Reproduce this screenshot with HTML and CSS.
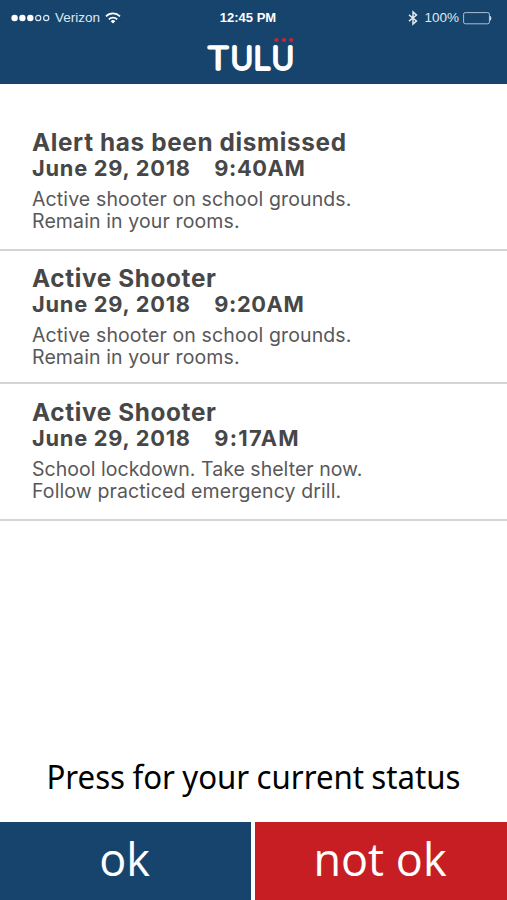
FILE: index.html
```html
<!DOCTYPE html>
<html lang="en">
<head>
<meta charset="utf-8">
<title>TULU</title>
<link rel="stylesheet" href="styles.css">
</head>
<body>
<div class="app">
  <header class="header">
    <div class="status">
      <div class="carrier">
        <svg class="signal" width="39" height="8" viewBox="0 0 39 8"><g fill="#fff"><circle cx="3.6" cy="4" r="3.2"/><circle cx="11.4" cy="4" r="3.2"/><circle cx="19.3" cy="4" r="3.2"/></g><g fill="none" stroke="#dfe8f0" stroke-width="1.2"><circle cx="27.2" cy="4" r="2.6"/><circle cx="35.2" cy="4" r="2.6"/></g></svg>
        <span>Verizon</span>
        <svg class="wifi" width="16" height="12" viewBox="0 0 16 12"><g fill="none" stroke="#fff" stroke-width="1.7"><path d="M1 4.3a10 10 0 0 1 14 0"/><path d="M3.8 7.3a6 6 0 0 1 8.4 0"/></g><path d="M5.7 9.2a3.3 3.3 0 0 1 4.6 0L8 11.5z" fill="#fff"/></svg>
      </div>
      <time class="clock">12:45 PM</time>
      <div class="power">
        <svg class="bluetooth" width="10" height="14" viewBox="0 0 10 14"><path d="M1 3.8l7.5 6.1L5 13V1l3.5 3.1L1 10.2" fill="none" stroke="#dfe8f0" stroke-width="1.5"/></svg>
        <span>100%</span>
        <svg class="battery" width="29" height="13" viewBox="0 0 29 13"><rect x=".6" y=".6" width="25.8" height="11.2" rx="1.6" fill="none" stroke="#a9bfd2" stroke-width="1"/><path d="M27.2 4.2q1.6 2 0 4.2z" fill="#fff" stroke="#fff" stroke-width=".6"/></svg>
      </div>
    </div>
    <svg class="logo" width="90" height="46" viewBox="0 0 90 46"><g class="wordmark"><text transform="translate(1.2 33) scale(1.2 1)">T</text><text y="33" x="25.3 47.9 66.2">ULU</text></g><g fill="#d3202c"><circle cx="70.5" cy="4" r="2.1"/><circle cx="78" cy="4" r="2.1"/><circle cx="85.2" cy="4" r="2.1"/></g></svg>
  </header>
  <main class="alerts">
    <article class="alert first">
      <h2>Alert has been dismissed</h2>
      <p class="when"><span>June 29, 2018</span><span>9:40AM</span></p>
      <p class="message">Active shooter on school grounds.<br>Remain in your rooms.</p>
    </article>
    <article class="alert second">
      <h2>Active Shooter</h2>
      <p class="when"><span>June 29, 2018</span><span>9:20AM</span></p>
      <p class="message">Active shooter on school grounds.<br>Remain in your rooms.</p>
    </article>
    <article class="alert third">
      <h2>Active Shooter</h2>
      <p class="when"><span>June 29, 2018</span><span class="wide">9:17AM</span></p>
      <p class="message"><span class="tight">School lockdown. Take shelter now.</span><br>Follow practiced emergency drill.</p>
    </article>
  </main>
  <footer class="footer">
    <p class="prompt">Press for your current status</p>
    <div class="actions">
      <button class="ok">ok</button>
      <button class="not-ok">not ok</button>
    </div>
  </footer>
</div>
</body>
</html>
```
FILE: styles.css
```css
* { box-sizing: border-box; }
body { margin: 0; background: #fff; }
h2, p { margin: 0; white-space: nowrap; }
svg { display: block; flex: none; overflow: visible; }

.app {
  width: 507px;
  height: 900px;
  display: flex;
  flex-direction: column;
  font-family: Inter, sans-serif;
}

.header {
  height: 84px;
  background: #17446d;
  color: #fff;
}
.status {
  height: 36px;
  padding: 0 15px 0 11px;
  display: grid;
  grid-template-columns: 1fr auto 1fr;
  align-items: center;
  font: 13.5px/36px "Liberation Sans", sans-serif;
}
.carrier, .power { display: flex; align-items: center; color: #dfe8f0; }
.carrier span { margin: 0 5px 0 5px; }
.clock { font-weight: bold; font-size: 13px; margin-right: 7px; }
.power { justify-content: flex-end; }
.power span { margin: 0 4px 0 6px; }
.logo { margin: 0 0 0 206px; }
.wordmark text {
  font: 100 29.5px Inter, sans-serif;
  fill: #fff;
  stroke: #fff;
  stroke-width: 4px;
  stroke-linejoin: round;
  vector-effect: non-scaling-stroke;
}

.alert { padding-left: 32px; border-bottom: 2px solid #d4d4d4; color: #474747; }
.first { height: 167px; padding-top: 42px; }
.second { height: 133px; padding-top: 11px; }
.third { height: 137px; padding-top: 12px; }
.alert h2 { font-size: 24.3px; line-height: 32px; font-weight: 680; letter-spacing: .64px; }
.when { display: flex; gap: 23.5px; font-size: 21.8px; line-height: 20px; font-weight: 670; letter-spacing: .75px; }
.when span + span { letter-spacing: .6px; }
.when .wide { letter-spacing: 1.3px; }
.message { margin-top: 10px; font-size: 19.5px; line-height: 22px; color: #58585a; letter-spacing: .12px; }
.tight { letter-spacing: .03px; }

.footer { margin-top: auto; }
.prompt {
  height: 66px;
  text-align: center;
  font: 33px/42px "Noto Sans", sans-serif;
  transform: scaleX(.945);
  word-spacing: -.8px;
  color: #000;
}
.actions {
  display: grid;
  grid-template-columns: 251px 252px;
  gap: 4px;
  height: 78px;
}
.actions button {
  border: 0;
  padding: 0 2px 4px 0;
  color: #fff;
  font: 45px/74px "Open Sans", sans-serif;
}
.ok { background: #17446d; }
.not-ok { background: #c61e23; }
```
